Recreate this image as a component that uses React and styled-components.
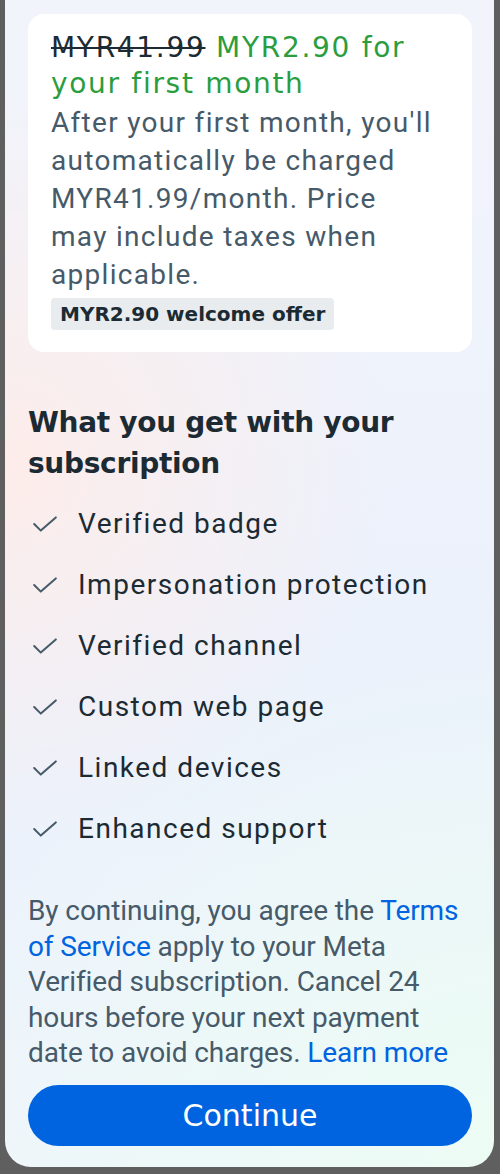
import styled, { createGlobalStyle } from "styled-components";

const GlobalStyle = createGlobalStyle`
  html, body {
    margin: 0;
    padding: 0;
    background: #5f5f5f;
  }
  * {
    box-sizing: border-box;
  }
`;

const Screen = styled.div`
  width: 500px;
  height: 1174px;
  padding: 0 6px 0 5px;
  background: #5f5f5f;
`;

const Sheet = styled.div`
  height: 1167px;
  padding: 14px 22px 21px 23px;
  border-radius: 0 0 26px 26px;
  background:
    radial-gradient(circle at 0% 40%, rgba(255, 236, 232, 0.9) 0, rgba(255, 236, 232, 0) 45%),
    radial-gradient(circle at 100% 100%, rgba(236, 252, 244, 1) 0, rgba(236, 252, 244, 0) 45%),
    linear-gradient(180deg, #f2f4fb 0%, #ebf1fc 60%, #eef5fb 100%);
  display: flex;
  flex-direction: column;
  font-family: Roboto, "Noto Sans", sans-serif;
`;

const OfferCard = styled.div`
  background: #ffffff;
  border-radius: 16px;
  padding: 16px 36px 22px 23px;
`;

const PriceLine = styled.div`
  font-family: "DejaVu Sans", Inter, sans-serif;
  font-size: 28px;
  line-height: 36px;
  letter-spacing: 1.7px;
  color: #2a9d3f;
`;

const OldPrice = styled.span`
  color: #1c2b33;
  text-decoration: line-through;
  text-decoration-thickness: 2px;
`;

const OfferText = styled.p`
  margin: 2px 0 0;
  font-size: 28px;
  line-height: 38px;
  letter-spacing: 1.3px;
  color: #465a69;
`;

const Badge = styled.span`
  display: inline-block;
  margin-top: 4px;
  padding: 0 9px;
  height: 32px;
  line-height: 32px;
  border-radius: 4px;
  background: #e8ecef;
  font-family: "DejaVu Sans", Inter, sans-serif;
  font-weight: 700;
  font-size: 20px;
  color: #1c2b33;
`;

const SectionTitle = styled.h2`
  margin: 50px 0 0;
  font-family: "DejaVu Sans", Inter, sans-serif;
  font-weight: 700;
  font-size: 28px;
  line-height: 41px;
  letter-spacing: -0.3px;
  color: #1c2b33;
`;

const FeatureList = styled.ul`
  list-style: none;
  margin: 9px 0 0;
  padding: 0;
`;

const Feature = styled.li`
  display: flex;
  align-items: center;
  height: 61px;
  font-size: 28px;
  letter-spacing: 1.5px;
  color: #1c2b33;
`;

const CheckIcon = styled.svg`
  width: 24px;
  height: 16px;
  margin-left: 5px;
  margin-right: 21px;
  flex-shrink: 0;
`;

const Legal = styled.p`
  margin: 34px 0 0;
  font-size: 28px;
  line-height: 35.5px;
  letter-spacing: -0.1px;
  color: #465a69;
`;

const Link = styled.a`
  color: #0064e0;
  text-decoration: none;
`;

const ContinueButton = styled.button`
  margin-top: 14px;
  height: 61px;
  width: 100%;
  flex-shrink: 0;
  border: none;
  border-radius: 31px;
  background: #0064e0;
  color: #ffffff;
  font-family: "DejaVu Sans", Inter, sans-serif;
  font-size: 30px;
`;

const features = [
  "Verified badge",
  "Impersonation protection",
  "Verified channel",
  "Custom web page",
  "Linked devices",
  "Enhanced support",
];

function Check() {
  return (
    <CheckIcon viewBox="0 0 24 16" fill="none">
      <path
        d="M1.2 8 L7.8 14.6 L22.8 1.4"
        stroke="#465a69"
        strokeWidth="2"
        strokeLinecap="round"
        strokeLinejoin="round"
      />
    </CheckIcon>
  );
}

export default function App() {
  return (
    <>
      <GlobalStyle />
      <Screen>
        <Sheet>
          <OfferCard>
            <PriceLine>
              <OldPrice>MYR41.99</OldPrice> MYR2.90 for your first month
            </PriceLine>
            <OfferText>
              After your first month, you'll automatically be charged
              MYR41.99/month. Price may include taxes when applicable.
            </OfferText>
            <Badge>MYR2.90 welcome offer</Badge>
          </OfferCard>

          <SectionTitle>What you get with your subscription</SectionTitle>
          <FeatureList>
            {features.map((item) => (
              <Feature key={item}>
                <Check />
                {item}
              </Feature>
            ))}
          </FeatureList>

          <Legal>
            By continuing, you agree the <Link href="#">Terms of Service</Link>{" "}
            apply to your Meta Verified subscription. Cancel 24 hours before
            your next payment date to avoid charges.{" "}
            <Link href="#">Learn more</Link>
          </Legal>
          <ContinueButton>Continue</ContinueButton>
        </Sheet>
      </Screen>
    </>
  );
}
